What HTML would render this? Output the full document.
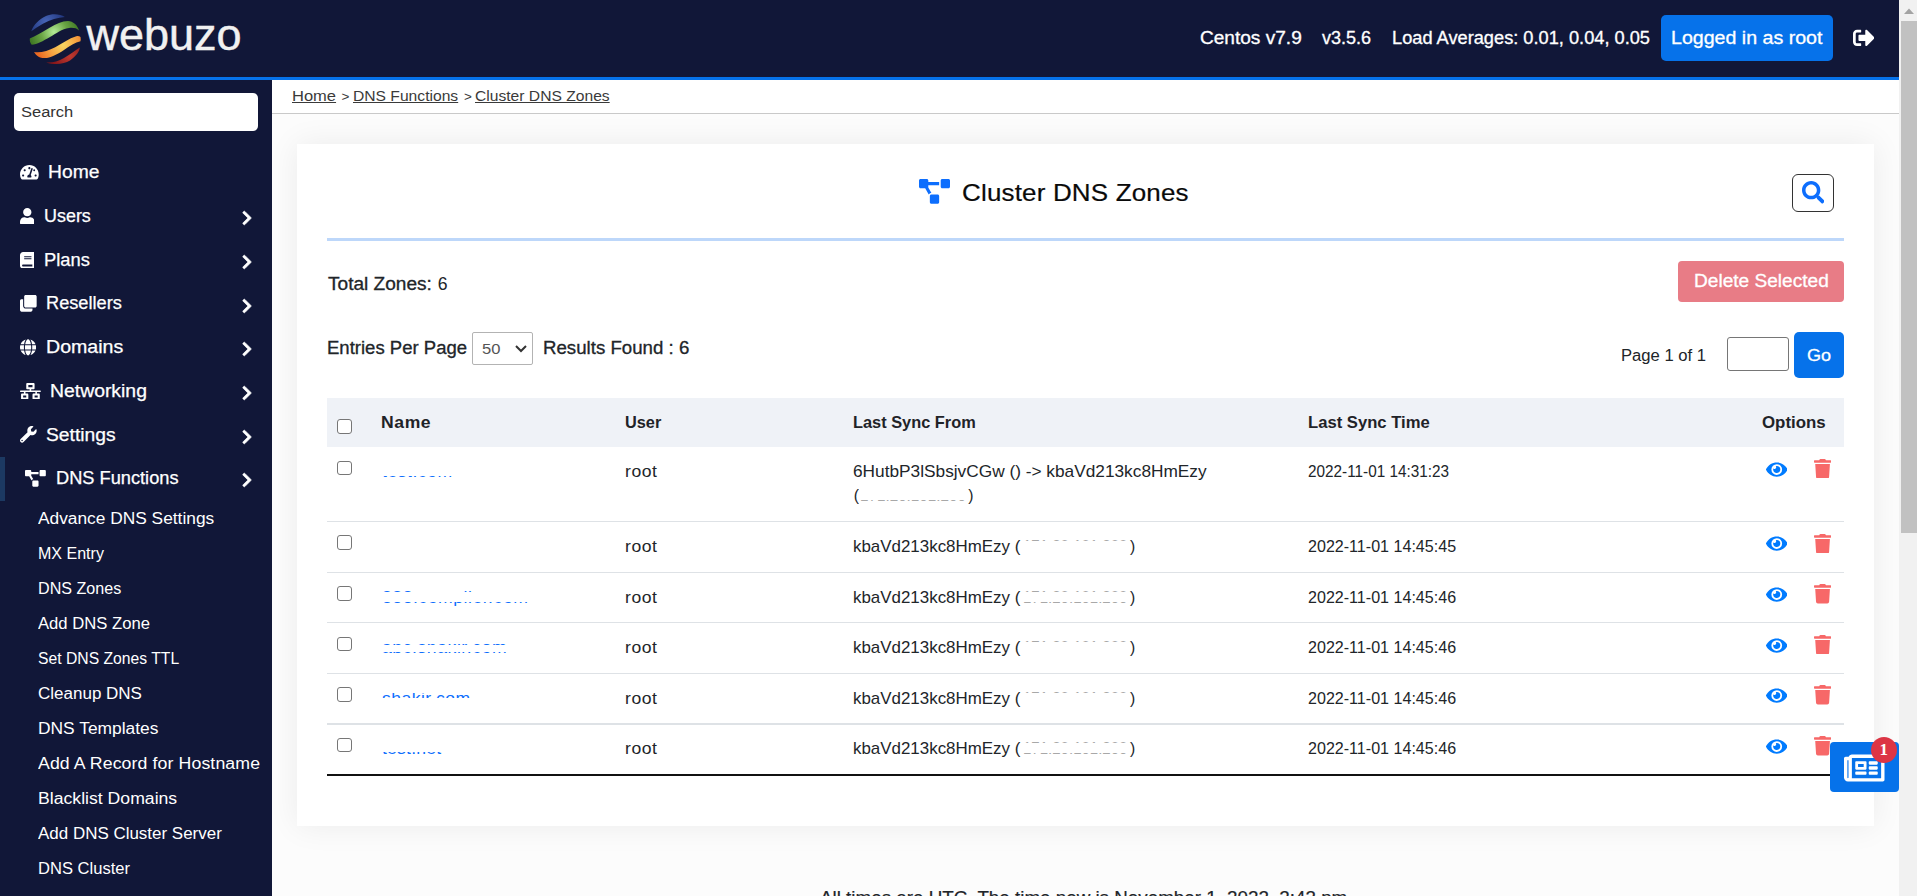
<!DOCTYPE html>
<html lang="en"><head><meta charset="utf-8"><title>Cluster DNS Zones</title>
<style>
*{box-sizing:border-box;margin:0;padding:0}
html,body{width:1917px;height:896px;overflow:hidden;background:#fcfcfc;font-family:"Liberation Sans",sans-serif;color:#212529}
.abs{position:absolute}
.ic{position:absolute;display:block}
.t{position:absolute;white-space:nowrap;line-height:1;transform-origin:0 0}
#hdr{left:0;top:0;width:1899px;height:80px;background:#111738;border-bottom:3px solid #0672ea}
#side{left:0;top:80px;width:272px;height:816px;background:#111738}
#crumb{left:272px;top:80px;width:1627px;height:34px;background:#fff;border-bottom:1.3px solid #c9c9c9}
#card{left:297px;top:144px;width:1577px;height:682px;background:#fff;box-shadow:0 0 30px rgba(0,0,0,.07)}
.cb{position:absolute;width:14.5px;height:14.5px;border:1.3px solid #767676;border-radius:3px;background:#fff}
.hr{position:absolute;left:327px;width:1517px;height:1.4px;background:#dee2e6}
.mask{position:absolute;background:#fff}
u{text-decoration:underline;text-underline-offset:1px}
</style></head>
<body>
<div id="hdr" class="abs"></div>
<svg class="ic" style="left:20px;top:5px;width:80px;height:70px" viewBox="20 5 80 70">
<radialGradient id="gB" gradientUnits="userSpaceOnUse" cx="46" cy="22" r="20"><stop offset="0" stop-color="#4766b8"/><stop offset="1" stop-color="#1e3278"/></radialGradient>
<radialGradient id="gG" gradientUnits="userSpaceOnUse" cx="54" cy="32" r="26"><stop offset="0" stop-color="#b4ec98"/><stop offset=".5" stop-color="#6aa544"/><stop offset="1" stop-color="#3c7422"/></radialGradient>
<radialGradient id="gY" gradientUnits="userSpaceOnUse" cx="63" cy="45" r="26"><stop offset="0" stop-color="#f8d661"/><stop offset=".55" stop-color="#f5a040"/><stop offset="1" stop-color="#ec6a22"/></radialGradient>
<radialGradient id="gR" gradientUnits="userSpaceOnUse" cx="70" cy="56" r="18"><stop offset="0" stop-color="#c03a30"/><stop offset="1" stop-color="#85161a"/></radialGradient>
<path fill="url(#gB)" d="M31.3 31.2 C33 25 39.5 19 46 16 C52 13.5 60 13.8 64.9 17.1 C58 17.5 50 20 43.4 23.5 C38 26.5 34 29.5 31.3 31.2z"/>
<path fill="url(#gG)" d="M29.8 38.6 C36 36 43.4 31.6 50 27.5 C56 24 62 21 68 21 C73 21.2 77.5 25 79 30.4 C76.5 28 73 27.5 69 28 C62 29 56 33.5 50 37 C43 41 37 44.5 31.7 44.8 C30 43 29.6 40.5 29.8 38.6z"/>
<path fill="url(#gY)" d="M34.1 51.9 C40 53 48 51 55.2 47.2 C62 43.5 69 38.5 76.3 36.3 C78 35.9 79.5 36.2 80.5 37 C80.8 38.5 80.8 40 80.5 41.3 C75 42.5 70 46 64 50 C57 54.5 50 58 45 58.1 C40 58.3 36 55.5 34.1 51.9z"/>
<path fill="url(#gR)" d="M46.2 62.4 C52 62.8 58 61.5 64 58 C70 54.5 75.5 50.500 79.8 47.6 C79.5 51.5 76.5 56 70 60.5 C64 64.2 55 65.3 46.2 62.4z"/>
</svg>
<div class="t" style="left:86.5px;top:12px;font-size:45px;color:#f1f1f1;-webkit-text-stroke:0.45px #f1f1f1">webuzo</div>
<div class="t " style="left:1200.20px;top:30.00px;font-size:17.5px;color:#fff;transform:scaleX(1.0893);-webkit-text-stroke:0.3px #fff;">Centos v7.9</div>
<div class="t " style="left:1322.40px;top:30.00px;font-size:17.5px;color:#fff;transform:scaleX(1.0296);-webkit-text-stroke:0.3px #fff;">v3.5.6</div>
<div class="t " style="left:1392.40px;top:30.00px;font-size:17.5px;color:#fff;transform:scaleX(1.0412);-webkit-text-stroke:0.3px #fff;">Load Averages: 0.01, 0.04, 0.05</div>
<div class="abs" style="left:1661px;top:15px;width:172px;height:46px;background:#0672ea;border-radius:5px"></div>
<div class="t " style="left:1671.40px;top:30.00px;font-size:17.5px;color:#fff;transform:scaleX(1.1199);-webkit-text-stroke:0.3px #fff;">Logged in as root</div>
<svg class="ic" style="left:1852.5px;top:27.3px;width:21.80px;height:21.8px;" viewBox="0 0 512 512"><path fill="#fff" d="M497 273L329 441c-15 15-41 4.500-41-17v-96H152c-13.300 0-24-10.700-24-24v-96c0-13.300 10.700-24 24-24h136V88c0-21.400 25.900-32 41-17l168 168c9.300 9.400 9.300 24.600 0 34zM192 436v-40c0-6.600-5.400-12-12-12H96c-17.700 0-32-14.300-32-32V160c0-17.700 14.300-32 32-32h84c6.600 0 12-5.400 12-12V76c0-6.600-5.400-12-12-12H96c-53 0-96 43-96 96v192c0 53 43 96 96 96h84c6.600 0 12-5.400 12-12z"/></svg>
<div id="side" class="abs"></div>
<div class="abs" style="left:14px;top:93px;width:244px;height:38px;background:#fff;border-radius:5px"></div>
<div class="t " style="left:21.20px;top:104.00px;font-size:15.3px;color:#333;transform:scaleX(1.0783);">Search</div>
<div class="abs" style="left:0;top:457px;width:5px;height:43.7px;background:#1c3962"></div>
<svg class="ic" style="left:19.9px;top:164.1px;width:18.75px;height:16.67px;" viewBox="0 0 576 512"><path fill="#fff" d="M288 32C128.94 32 0 160.94 0 320c0 52.8 14.25 102.26 39.06 144.8 5.61 9.62 16.3 15.2 27.44 15.2h443c11.14 0 21.83-5.58 27.44-15.2C561.75 422.26 576 372.8 576 320c0-159.06-128.94-288-288-288zm0 64c17.67 0 32 14.33 32 32s-14.33 32-32 32-32-14.33-32-32 14.33-32 32-32zM96 384c-17.67 0-32-14.33-32-32s14.33-32 32-32 32 14.33 32 32-14.33 32-32 32zm48-160c-17.67 0-32-14.33-32-32s14.33-32 32-32 32 14.33 32 32-14.33 32-32 32zm246.770-72.410l-61.330 184C343.130 347.330 352 364.540 352 384c0 11.720-3.380 22.550-8.880 32H232.880c-5.500-9.450-8.880-20.280-8.880-32 0-33.940 26.500-61.430 59.900-63.590l61.340-184.010c4.170-12.560 17.730-19.450 30.360-15.170 12.570 4.190 19.350 17.790 15.170 30.360zm14.660 57.200l15.520-46.550c3.470-1.290 7.130-2.230 11.050-2.230 17.670 0 32 14.330 32 32s-14.330 32-32 32c-11.380-.010-20.890-6.280-26.570-15.220zM480 384c-17.670 0-32-14.330-32-32s14.330-32 32-32 32 14.330 32 32-14.330 32-32 32z"/></svg>
<div class="t " style="left:48.30px;top:164.00px;font-size:17.6px;color:#fff;transform:scaleX(1.0959);-webkit-text-stroke:0.25px #fff;">Home</div>
<svg class="ic" style="left:19.9px;top:207.8px;width:14.59px;height:16.67px;" viewBox="0 0 448 512"><path fill="#fff" d="M224 256c70.700 0 128-57.300 128-128S294.700 0 224 0 96 57.300 96 128s57.300 128 128 128zm89.600 32h-16.700c-22.200 10.200-46.900 16-72.900 16s-50.600-5.800-72.900-16h-16.700C60.200 288 0 348.200 0 422.400V464c0 26.500 21.500 48 48 48h352c26.500 0 48-21.500 48-48v-41.600c0-74.200-60.200-134.400-134.400-134.400z"/></svg>
<div class="t " style="left:44.20px;top:208.00px;font-size:17.6px;color:#fff;transform:scaleX(1.0188);-webkit-text-stroke:0.25px #fff;">Users</div>
<svg class="ic" style="left:241.7px;top:210.2px;width:10.00px;height:16px;overflow:visible" viewBox="0 0 320 512"><path fill="#fff" stroke="#fff" stroke-width="22" d="M285.476 272.971L91.132 467.314c-9.373 9.373-24.569 9.373-33.941 0l-22.667-22.667c-9.357-9.357-9.375-24.522-.04-33.901L188.505 256 34.484 101.255c-9.335-9.379-9.317-24.544.04-33.901l22.667-22.667c9.373-9.373 24.569-9.373 33.941 0L285.475 239.030c9.373 9.372 9.373 24.568.001 33.941z"/></svg>
<svg class="ic" style="left:19.9px;top:251.5px;width:14.59px;height:16.67px;" viewBox="0 0 448 512"><path fill="#fff" d="M448 360V24c0-13.300-10.700-24-24-24H96C43 0 0 43 0 96v320c0 53 43 96 96 96h328c13.300 0 24-10.700 24-24v-16c0-7.500-3.500-14.300-8.900-18.700-4.200-15.400-4.200-59.300 0-74.700 5.400-4.300 8.900-11.100 8.900-18.600zM128 134c0-3.300 2.700-6 6-6h212c3.300 0 6 2.700 6 6v20c0 3.300-2.700 6-6 6H134c-3.300 0-6-2.700-6-6v-20zm0 64c0-3.300 2.700-6 6-6h212c3.300 0 6 2.700 6 6v20c0 3.300-2.700 6-6 6H134c-3.300 0-6-2.700-6-6v-20zm253.400 250H96c-17.700 0-32-14.300-32-32 0-17.600 14.400-32 32-32h285.400c-1.900 17.100-1.900 46.900 0 64z"/></svg>
<div class="t " style="left:44.20px;top:252.00px;font-size:17.6px;color:#fff;transform:scaleX(1.0432);-webkit-text-stroke:0.25px #fff;">Plans</div>
<svg class="ic" style="left:241.7px;top:253.9px;width:10.00px;height:16px;overflow:visible" viewBox="0 0 320 512"><path fill="#fff" stroke="#fff" stroke-width="22" d="M285.476 272.971L91.132 467.314c-9.373 9.373-24.569 9.373-33.941 0l-22.667-22.667c-9.357-9.357-9.375-24.522-.04-33.901L188.505 256 34.484 101.255c-9.335-9.379-9.317-24.544.04-33.901l22.667-22.667c9.373-9.373 24.569-9.373 33.941 0L285.475 239.030c9.373 9.372 9.373 24.568.001 33.941z"/></svg>
<svg class="ic" style="left:19.9px;top:295.2px;width:16.67px;height:16.67px;" viewBox="0 0 512 512"><path fill="#fff" d="M464 0c26.510 0 48 21.490 48 48v288c0 26.510-21.490 48-48 48H176c-26.510 0-48-21.490-48-48V48c0-26.510 21.490-48 48-48h288M176 416c-44.112 0-80-35.888-80-80V128H48c-26.510 0-48 21.490-48 48v288c0 26.510 21.490 48 48 48h288c26.510 0 48-21.490 48-48v-48H176z"/></svg>
<div class="t " style="left:46.40px;top:295.00px;font-size:17.6px;color:#fff;transform:scaleX(1.0342);-webkit-text-stroke:0.25px #fff;">Resellers</div>
<svg class="ic" style="left:241.7px;top:297.6px;width:10.00px;height:16px;overflow:visible" viewBox="0 0 320 512"><path fill="#fff" stroke="#fff" stroke-width="22" d="M285.476 272.971L91.132 467.314c-9.373 9.373-24.569 9.373-33.941 0l-22.667-22.667c-9.357-9.357-9.375-24.522-.04-33.901L188.505 256 34.484 101.255c-9.335-9.379-9.317-24.544.04-33.901l22.667-22.667c9.373-9.373 24.569-9.373 33.941 0L285.475 239.030c9.373 9.372 9.373 24.568.001 33.941z"/></svg>
<svg class="ic" style="left:19.9px;top:338.9px;width:16.15px;height:16.67px;" viewBox="0 0 496 512"><path fill="#fff" d="M336.500 160C322 70.700 287.800 8 248 8s-74 62.700-88.500 152h177zM152 256c0 22.200 1.200 43.500 3.300 64h185.300c2.100-20.500 3.300-41.800 3.300-64s-1.200-43.500-3.300-64H155.300c-2.100 20.500-3.300 41.800-3.300 64zm324.700-96c-28.600-67.900-86.500-120.400-158-141.600 24.400 33.800 41.200 84.700 50 141.600h108zM177.200 18.400C105.800 39.600 47.800 92.100 19.300 160h108c8.700-56.900 25.500-107.800 49.900-141.600zM487.400 192H372.700c2.100 21 3.300 42.500 3.300 64s-1.200 43-3.300 64h114.600c5.500-20.500 8.600-41.800 8.600-64s-3.100-43.500-8.500-64zM120 256c0-21.500 1.200-43 3.300-64H8.600C3.200 212.500 0 233.800 0 256s3.200 43.500 8.600 64h114.600c-2-21-3.200-42.500-3.200-64zm39.500 96c14.500 89.300 48.700 152 88.500 152s74-62.700 88.500-152h-177zm159.300 141.600c71.400-21.200 129.400-73.700 158-141.600h-108c-8.800 56.900-25.600 107.800-50 141.600zM19.300 352c28.600 67.900 86.500 120.400 158 141.600-24.400-33.800-41.200-84.700-50-141.600h-108z"/></svg>
<div class="t " style="left:46.00px;top:339.00px;font-size:17.6px;color:#fff;transform:scaleX(1.1133);-webkit-text-stroke:0.25px #fff;">Domains</div>
<svg class="ic" style="left:241.7px;top:341.3px;width:10.00px;height:16px;overflow:visible" viewBox="0 0 320 512"><path fill="#fff" stroke="#fff" stroke-width="22" d="M285.476 272.971L91.132 467.314c-9.373 9.373-24.569 9.373-33.941 0l-22.667-22.667c-9.357-9.357-9.375-24.522-.04-33.901L188.505 256 34.484 101.255c-9.335-9.379-9.317-24.544.04-33.901l22.667-22.667c9.373-9.373 24.569-9.373 33.941 0L285.475 239.030c9.373 9.372 9.373 24.568.001 33.941z"/></svg>
<svg class="ic" style="left:19.9px;top:382.6px;width:20.84px;height:16.67px;" viewBox="0 0 640 512"><path fill="#fff" d="M640 264v-16c0-8.840-7.160-16-16-16H344v-40h72c17.670 0 32-14.330 32-32V32c0-17.670-14.330-32-32-32H224c-17.670 0-32 14.330-32 32v128c0 17.670 14.330 32 32 32h72v40H16c-8.840 0-16 7.160-16 16v16c0 8.840 7.160 16 16 16h104v40H64c-17.670 0-32 14.330-32 32v128c0 17.670 14.330 32 32 32h160c17.670 0 32-14.330 32-32V352c0-17.670-14.330-32-32-32h-56v-40h304v40h-56c-17.670 0-32 14.330-32 32v128c0 17.670 14.330 32 32 32h160c17.670 0 32-14.330 32-32V352c0-17.670-14.330-32-32-32h-56v-40h104c8.840 0 16-7.160 16-16zM256 128V64h128v64H256zm-64 320H96v-64h96v64zm352 0h-96v-64h96v64z"/></svg>
<div class="t " style="left:50.30px;top:383.00px;font-size:17.6px;color:#fff;transform:scaleX(1.1011);-webkit-text-stroke:0.25px #fff;">Networking</div>
<svg class="ic" style="left:241.7px;top:385.0px;width:10.00px;height:16px;overflow:visible" viewBox="0 0 320 512"><path fill="#fff" stroke="#fff" stroke-width="22" d="M285.476 272.971L91.132 467.314c-9.373 9.373-24.569 9.373-33.941 0l-22.667-22.667c-9.357-9.357-9.375-24.522-.04-33.901L188.505 256 34.484 101.255c-9.335-9.379-9.317-24.544.04-33.901l22.667-22.667c9.373-9.373 24.569-9.373 33.941 0L285.475 239.030c9.373 9.372 9.373 24.568.001 33.941z"/></svg>
<svg class="ic" style="left:19.9px;top:426.3px;width:16.67px;height:16.67px;" viewBox="0 0 512 512"><path fill="#fff" d="M507.730 109.100c-2.240-9.030-13.540-12.090-20.120-5.510l-74.360 74.360-67.880-11.310-11.310-67.880 74.360-74.360c6.620-6.620 3.430-17.900-5.660-20.160-47.380-11.740-99.550.91-136.580 37.930-39.640 39.640-50.550 97.100-34.050 147.200L18.740 402.760c-24.990 24.990-24.990 65.510 0 90.500 24.990 24.990 65.510 24.990 90.500 0l213.210-213.210c50.120 16.710 107.470 5.680 147.370-34.220 37.070-37.070 49.700-89.320 37.910-136.730zM64 472c-13.250 0-24-10.750-24-24 0-13.260 10.750-24 24-24s24 10.740 24 24c0 13.250-10.750 24-24 24z"/></svg>
<div class="t " style="left:46.40px;top:427.00px;font-size:17.6px;color:#fff;transform:scaleX(1.0955);-webkit-text-stroke:0.25px #fff;">Settings</div>
<svg class="ic" style="left:241.7px;top:428.7px;width:10.00px;height:16px;overflow:visible" viewBox="0 0 320 512"><path fill="#fff" stroke="#fff" stroke-width="22" d="M285.476 272.971L91.132 467.314c-9.373 9.373-24.569 9.373-33.941 0l-22.667-22.667c-9.357-9.357-9.375-24.522-.04-33.901L188.505 256 34.484 101.255c-9.335-9.379-9.317-24.544.04-33.901l22.667-22.667c9.373-9.373 24.569-9.373 33.941 0L285.475 239.030c9.373 9.372 9.373 24.568.001 33.941z"/></svg>
<svg class="ic" style="left:24.7px;top:470.0px;width:20.84px;height:16.67px;" viewBox="0 0 640 512"><path fill="#fff" d="M384 320H256c-17.670 0-32 14.330-32 32v128c0 17.670 14.330 32 32 32h128c17.670 0 32-14.330 32-32V352c0-17.670-14.330-32-32-32zM192 32c0-17.670-14.330-32-32-32H32C14.330 0 0 14.330 0 32v128c0 17.670 14.330 32 32 32h95.720l73.160 128.040C211.980 300.980 232.400 288 256 288h.28L192 175.510V128h224V64H192V32zM608 0H480c-17.670 0-32 14.330-32 32v128c0 17.670 14.330 32 32 32h128c17.670 0 32-14.330 32-32V32c0-17.670-14.330-32-32-32z"/></svg>
<div class="t " style="left:55.60px;top:470.00px;font-size:17.6px;color:#fff;transform:scaleX(1.0358);-webkit-text-stroke:0.25px #fff;">DNS Functions</div>
<svg class="ic" style="left:241.7px;top:472.4px;width:10.00px;height:16px;overflow:visible" viewBox="0 0 320 512"><path fill="#fff" stroke="#fff" stroke-width="22" d="M285.476 272.971L91.132 467.314c-9.373 9.373-24.569 9.373-33.941 0l-22.667-22.667c-9.357-9.357-9.375-24.522-.04-33.901L188.505 256 34.484 101.255c-9.335-9.379-9.317-24.544.04-33.901l22.667-22.667c9.373-9.373 24.569-9.373 33.941 0L285.475 239.030c9.373 9.372 9.373 24.568.001 33.941z"/></svg>
<div class="t " style="left:38.10px;top:511.00px;font-size:15.8px;color:#fff;transform:scaleX(1.0965);">Advance DNS Settings</div>
<div class="t " style="left:38.10px;top:546.00px;font-size:15.8px;color:#fff;transform:scaleX(1.0148);">MX Entry</div>
<div class="t " style="left:38.10px;top:581.00px;font-size:15.8px;color:#fff;transform:scaleX(1.0198);">DNS Zones</div>
<div class="t " style="left:38.10px;top:616.00px;font-size:15.8px;color:#fff;transform:scaleX(1.0531);">Add DNS Zone</div>
<div class="t " style="left:38.10px;top:651.00px;font-size:15.8px;color:#fff;transform:scaleX(0.9946);">Set DNS Zones TTL</div>
<div class="t " style="left:38.10px;top:686.00px;font-size:15.8px;color:#fff;transform:scaleX(1.0764);">Cleanup DNS</div>
<div class="t " style="left:38.10px;top:721.00px;font-size:15.8px;color:#fff;transform:scaleX(1.1005);">DNS Templates</div>
<div class="t " style="left:38.10px;top:756.00px;font-size:15.8px;color:#fff;letter-spacing:0.099px;transform:scaleX(1.1200);">Add A Record for Hostname</div>
<div class="t " style="left:38.10px;top:791.00px;font-size:15.8px;color:#fff;transform:scaleX(1.1166);">Blacklist Domains</div>
<div class="t " style="left:38.10px;top:826.00px;font-size:15.8px;color:#fff;transform:scaleX(1.0736);">Add DNS Cluster Server</div>
<div class="t " style="left:38.10px;top:861.00px;font-size:15.8px;color:#fff;transform:scaleX(1.0482);">DNS Cluster</div>
<div id="crumb" class="abs"></div>
<div class="t " style="left:292.20px;top:89.00px;font-size:14.8px;color:#3a3a3a;transform:scaleX(1.1160);"><u>Home</u></div>
<div class="t " style="left:341.60px;top:90.00px;font-size:13.5px;color:#3a3a3a;">&gt;</div>
<div class="t " style="left:353.20px;top:89.00px;font-size:14.8px;color:#3a3a3a;transform:scaleX(1.0570);"><u>DNS Functions</u></div>
<div class="t " style="left:464.00px;top:90.00px;font-size:13.5px;color:#3a3a3a;">&gt;</div>
<div class="t " style="left:475.30px;top:89.00px;font-size:14.8px;color:#3a3a3a;transform:scaleX(1.0565);"><u>Cluster DNS Zones</u></div>
<div id="card" class="abs"></div>
<svg class="ic" style="left:918.6px;top:179.2px;width:31.00px;height:24.8px;" viewBox="0 0 640 512"><path fill="#0d6efd" d="M384 320H256c-17.670 0-32 14.330-32 32v128c0 17.670 14.330 32 32 32h128c17.670 0 32-14.330 32-32V352c0-17.670-14.330-32-32-32zM192 32c0-17.670-14.330-32-32-32H32C14.330 0 0 14.330 0 32v128c0 17.670 14.330 32 32 32h95.720l73.160 128.040C211.980 300.980 232.400 288 256 288h.28L192 175.510V128h224V64H192V32zM608 0H480c-17.670 0-32 14.330-32 32v128c0 17.670 14.330 32 32 32h128c17.670 0 32-14.330 32-32V32c0-17.670-14.330-32-32-32z"/></svg>
<div class="t " style="left:962.30px;top:182.00px;font-size:23.2px;color:#0a0a0a;letter-spacing:0.159px;transform:scaleX(1.1200);-webkit-text-stroke:0.2px #0a0a0a;">Cluster DNS Zones</div>
<div class="abs" style="left:1792px;top:174px;width:42px;height:38px;border:1.2px solid #333;border-radius:6px;background:#fff"></div>
<svg class="ic" style="left:1801.9px;top:181.3px;width:22.60px;height:22.6px;" viewBox="0 0 512 512"><path fill="#0d6efd" d="M505 442.700L405.300 343c-4.500-4.500-10.600-7-17-7H372c27.600-35.300 44-79.700 44-128C416 93.100 322.900 0 208 0S0 93.100 0 208s93.100 208 208 208c48.300 0 92.700-16.400 128-44v16.300c0 6.400 2.500 12.500 7 17l99.700 99.700c9.400 9.400 24.600 9.400 33.900 0l28.300-28.300c9.400-9.400 9.400-24.600.1-34zM208 336c-70.700 0-128-57.200-128-128 0-70.700 57.200-128 128-128 70.700 0 128 57.200 128 128 0 70.700-57.200 128-128 128z"/></svg>
<div class="abs" style="left:327px;top:238px;width:1517px;height:3px;background:#bdd7fa"></div>
<div class="t " style="left:327.90px;top:276.00px;font-size:17.6px;color:#212529;transform:scaleX(1.0842);-webkit-text-stroke:0.3px #212529;">Total Zones:</div>
<div class="t " style="left:437.70px;top:276.00px;font-size:17.6px;color:#212529;">6</div>
<div class="abs" style="left:1678px;top:261px;width:166px;height:41px;background:#e87c86;border-radius:4px"></div>
<div class="t " style="left:1693.50px;top:273.00px;font-size:17.5px;color:#fff;transform:scaleX(1.0911);-webkit-text-stroke:0.3px #fff;">Delete Selected</div>
<div class="t " style="left:327.20px;top:340.00px;font-size:17.6px;color:#212529;transform:scaleX(1.0529);-webkit-text-stroke:0.3px #212529;">Entries Per Page</div>
<div class="abs" style="left:472px;top:332px;width:61px;height:32.5px;border:1px solid #b3b3b3;border-radius:2px;background:#fff"></div>
<div class="t " style="left:481.90px;top:341.00px;font-size:15.3px;color:#555;transform:scaleX(1.0834);">50</div>
<svg class="ic" style="left:514px;top:343px;width:14px;height:11px" viewBox="0 0 14 11"><path d="M2 3 L7 8 L12 3" fill="none" stroke="#333" stroke-width="2"/></svg>
<div class="t " style="left:542.70px;top:340.00px;font-size:17.6px;color:#212529;transform:scaleX(1.0610);-webkit-text-stroke:0.3px #212529;">Results Found : 6</div>
<div class="t " style="left:1621.00px;top:347.00px;font-size:17.3px;color:#212529;transform:scaleX(0.9617);">Page 1 of 1</div>
<div class="abs" style="left:1727px;top:337px;width:62px;height:34px;border:1.3px solid #767676;border-radius:3px;background:#fff"></div>
<div class="abs" style="left:1794px;top:332px;width:50px;height:46px;background:#0672ea;border-radius:5px"></div>
<div class="t " style="left:1807.20px;top:347.00px;font-size:17.3px;color:#fff;transform:scaleX(1.0435);-webkit-text-stroke:0.3px #fff;">Go</div>
<div class="abs" style="left:327px;top:398px;width:1517px;height:48.8px;background:#eff2f7"></div>
<div class="cb" style="left:337.3px;top:419.3px"></div>
<div class="t " style="left:381.00px;top:415.00px;font-size:15.7px;color:#1f2328;letter-spacing:0.531px;transform:scaleX(1.1200);font-weight:bold;">Name</div>
<div class="t " style="left:625.00px;top:415.00px;font-size:15.7px;color:#1f2328;transform:scaleX(1.0391);font-weight:bold;">User</div>
<div class="t " style="left:852.80px;top:415.00px;font-size:15.7px;color:#1f2328;transform:scaleX(1.0429);font-weight:bold;">Last Sync From</div>
<div class="t " style="left:1307.50px;top:415.00px;font-size:15.7px;color:#1f2328;transform:scaleX(1.0607);font-weight:bold;">Last Sync Time</div>
<div class="t " style="left:1762.40px;top:415.00px;font-size:15.7px;color:#1f2328;transform:scaleX(1.0748);font-weight:bold;">Options</div>
<div class="cb" style="left:337.3px;top:460.6px"></div>
<div class="t " style="left:381.90px;top:464.00px;font-size:15.7px;color:#0d6efd;letter-spacing:0.463px;transform:scaleX(1.1200);">test.com</div>
<div class="mask" style="left:378.0px;top:462.0px;width:80.0px;height:13.7px"></div>
<div class="mask" style="left:378.0px;top:477.5px;width:80.0px;height:4.5px"></div>
<div class="t " style="left:625.00px;top:464.00px;font-size:15.7px;color:#212529;letter-spacing:0.496px;transform:scaleX(1.1200);">root</div>
<div class="t " style="left:853.30px;top:464.00px;font-size:15.7px;color:#212529;transform:scaleX(1.1007);">6HutbP3lSbsjvCGw () -&gt; kbaVd213kc8HmEzy</div>
<div class="t " style="left:853.80px;top:488.00px;font-size:15.7px;color:#212529;">(</div>
<div class="t " style="left:860.00px;top:488.00px;font-size:15.7px;color:#a8a8a8;transform:scaleX(0.9715);">171.20.101.200</div>
<div class="mask" style="left:859.0px;top:486.0px;width:108.5px;height:14.0px"></div>
<div class="mask" style="left:859.0px;top:501.0px;width:108.5px;height:5.0px"></div>
<div class="t " style="left:968.20px;top:488.00px;font-size:15.7px;color:#212529;">)</div>
<div class="t " style="left:1307.50px;top:464.00px;font-size:15.7px;color:#212529;transform:scaleX(0.9758);">2022-11-01 14:31:23</div>
<svg class="ic" style="left:1765.9px;top:459.6px;width:21.49px;height:19.1px;" viewBox="0 0 576 512"><path fill="#007bff" d="M572.52 241.4C518.29 135.59 410.93 64 288 64S57.68 135.64 3.48 241.41a32.35 32.35 0 0 0 0 29.190C57.710 376.410 165.070 448 288 448s230.320-71.640 284.520-177.410a32.350 32.350 0 0 0 0-29.190zM288 400a144 144 0 1 1 144-144 143.930 143.930 0 0 1-144 144zm0-240a95.310 95.310 0 0 0-25.310 3.790 47.850 47.850 0 0 1-66.900 66.900A95.780 95.780 0 1 0 288 160z"/></svg>
<svg class="ic" style="left:1813.9px;top:458.8px;width:17.15px;height:19.6px;" viewBox="0 0 448 512"><path fill="#f76868" d="M432 32H312l-9.400-18.700A24 24 0 0 0 281.100 0H166.800a23.720 23.720 0 0 0-21.400 13.300L136 32H16A16 16 0 0 0 0 48v32a16 16 0 0 0 16 16h416a16 16 0 0 0 16-16V48a16 16 0 0 0-16-16zM53.200 467a48 48 0 0 0 47.900 45h245.800a48 48 0 0 0 47.900-45L416 128H32z"/></svg>
<div class="hr" style="top:520.9px"></div>
<div class="cb" style="left:337.3px;top:535.4px"></div>
<div class="t " style="left:381.90px;top:539.00px;font-size:15.7px;color:#0d6efd;letter-spacing:1.103px;transform:scaleX(1.1200);">ab.in</div>
<div class="mask" style="left:378.0px;top:537.0px;width:53.0px;height:20.0px"></div>
<div class="t " style="left:625.00px;top:539.00px;font-size:15.7px;color:#212529;letter-spacing:0.496px;transform:scaleX(1.1200);">root</div>
<div class="t " style="left:852.80px;top:539.00px;font-size:15.7px;color:#212529;transform:scaleX(1.0782);">kbaVd213kc8HmEzy (</div>
<div class="t " style="left:1023.00px;top:539.00px;font-size:15.7px;color:#a8a8a8;transform:scaleX(0.9577);">171.20.101.200</div>
<div class="mask" style="left:1021.5px;top:537.0px;width:107.5px;height:3.2px"></div>
<div class="mask" style="left:1021.5px;top:541.0px;width:107.5px;height:16.0px"></div>
<div class="t " style="left:1130.10px;top:539.00px;font-size:15.7px;color:#212529;">)</div>
<div class="t " style="left:1307.50px;top:539.00px;font-size:15.7px;color:#212529;transform:scaleX(1.0249);">2022-11-01 14:45:45</div>
<svg class="ic" style="left:1765.9px;top:534.4px;width:21.49px;height:19.1px;" viewBox="0 0 576 512"><path fill="#007bff" d="M572.52 241.4C518.29 135.59 410.93 64 288 64S57.68 135.64 3.48 241.41a32.35 32.35 0 0 0 0 29.190C57.710 376.410 165.070 448 288 448s230.320-71.640 284.520-177.410a32.350 32.350 0 0 0 0-29.190zM288 400a144 144 0 1 1 144-144 143.930 143.930 0 0 1-144 144zm0-240a95.310 95.310 0 0 0-25.310 3.790 47.850 47.850 0 0 1-66.900 66.900A95.780 95.780 0 1 0 288 160z"/></svg>
<svg class="ic" style="left:1813.9px;top:533.6px;width:17.15px;height:19.6px;" viewBox="0 0 448 512"><path fill="#f76868" d="M432 32H312l-9.400-18.700A24 24 0 0 0 281.100 0H166.800a23.720 23.720 0 0 0-21.400 13.300L136 32H16A16 16 0 0 0 0 48v32a16 16 0 0 0 16 16h416a16 16 0 0 0 16-16V48a16 16 0 0 0-16-16zM53.200 467a48 48 0 0 0 47.900 45h245.800a48 48 0 0 0 47.900-45L416 128H32z"/></svg>
<div class="hr" style="top:571.5px"></div>
<div class="cb" style="left:337.3px;top:586.0px"></div>
<div class="t " style="left:381.90px;top:590.00px;font-size:15.7px;color:#0d6efd;letter-spacing:0.484px;transform:scaleX(1.1200);">888.complier.com</div>
<div class="mask" style="left:378.0px;top:588.0px;width:155.8px;height:3.4px"></div>
<div class="mask" style="left:378.0px;top:592.1px;width:155.8px;height:9.9px"></div>
<div class="t " style="left:625.00px;top:590.00px;font-size:15.7px;color:#212529;letter-spacing:0.496px;transform:scaleX(1.1200);">root</div>
<div class="t " style="left:852.80px;top:590.00px;font-size:15.7px;color:#212529;transform:scaleX(1.0782);">kbaVd213kc8HmEzy (</div>
<div class="t " style="left:1023.00px;top:590.00px;font-size:15.7px;color:#a8a8a8;transform:scaleX(0.9577);">171.20.101.200</div>
<div class="mask" style="left:1021.5px;top:588.0px;width:107.5px;height:3.2px"></div>
<div class="mask" style="left:1021.5px;top:592.0px;width:107.5px;height:10.0px"></div>
<div class="mask" style="left:1021.5px;top:603.0px;width:107.5px;height:5.0px"></div>
<div class="t " style="left:1130.10px;top:590.00px;font-size:15.7px;color:#212529;">)</div>
<div class="t " style="left:1307.50px;top:590.00px;font-size:15.7px;color:#212529;transform:scaleX(1.0249);">2022-11-01 14:45:46</div>
<svg class="ic" style="left:1765.9px;top:585.0px;width:21.49px;height:19.1px;" viewBox="0 0 576 512"><path fill="#007bff" d="M572.52 241.4C518.29 135.59 410.93 64 288 64S57.68 135.64 3.48 241.41a32.35 32.35 0 0 0 0 29.190C57.710 376.410 165.070 448 288 448s230.320-71.640 284.520-177.410a32.350 32.350 0 0 0 0-29.190zM288 400a144 144 0 1 1 144-144 143.930 143.930 0 0 1-144 144zm0-240a95.310 95.310 0 0 0-25.310 3.790 47.850 47.850 0 0 1-66.900 66.900A95.780 95.780 0 1 0 288 160z"/></svg>
<svg class="ic" style="left:1813.9px;top:584.2px;width:17.15px;height:19.6px;" viewBox="0 0 448 512"><path fill="#f76868" d="M432 32H312l-9.400-18.700A24 24 0 0 0 281.100 0H166.800a23.720 23.720 0 0 0-21.400 13.300L136 32H16A16 16 0 0 0 0 48v32a16 16 0 0 0 16 16h416a16 16 0 0 0 16-16V48a16 16 0 0 0-16-16zM53.200 467a48 48 0 0 0 47.900 45h245.800a48 48 0 0 0 47.900-45L416 128H32z"/></svg>
<div class="hr" style="top:622.1px"></div>
<div class="cb" style="left:337.3px;top:636.6px"></div>
<div class="t " style="left:381.90px;top:640.00px;font-size:15.7px;color:#0d6efd;letter-spacing:0.509px;transform:scaleX(1.1200);">abc.shakir.com</div>
<div class="mask" style="left:378.0px;top:638.0px;width:134.6px;height:6.3px"></div>
<div class="mask" style="left:378.0px;top:645.0px;width:134.6px;height:7.0px"></div>
<div class="mask" style="left:378.0px;top:653.0px;width:134.6px;height:5.0px"></div>
<div class="t " style="left:625.00px;top:640.00px;font-size:15.7px;color:#212529;letter-spacing:0.496px;transform:scaleX(1.1200);">root</div>
<div class="t " style="left:852.80px;top:640.00px;font-size:15.7px;color:#212529;transform:scaleX(1.0782);">kbaVd213kc8HmEzy (</div>
<div class="t " style="left:1023.00px;top:640.00px;font-size:15.7px;color:#a8a8a8;transform:scaleX(0.9577);">171.20.101.200</div>
<div class="mask" style="left:1021.5px;top:638.0px;width:107.5px;height:3.2px"></div>
<div class="mask" style="left:1021.5px;top:642.4px;width:107.5px;height:15.6px"></div>
<div class="t " style="left:1130.10px;top:640.00px;font-size:15.7px;color:#212529;">)</div>
<div class="t " style="left:1307.50px;top:640.00px;font-size:15.7px;color:#212529;transform:scaleX(1.0249);">2022-11-01 14:45:46</div>
<svg class="ic" style="left:1765.9px;top:635.6px;width:21.49px;height:19.1px;" viewBox="0 0 576 512"><path fill="#007bff" d="M572.52 241.4C518.29 135.59 410.93 64 288 64S57.68 135.64 3.48 241.41a32.35 32.35 0 0 0 0 29.190C57.710 376.410 165.070 448 288 448s230.320-71.640 284.520-177.410a32.350 32.350 0 0 0 0-29.190zM288 400a144 144 0 1 1 144-144 143.930 143.930 0 0 1-144 144zm0-240a95.310 95.310 0 0 0-25.310 3.790 47.850 47.850 0 0 1-66.900 66.900A95.780 95.780 0 1 0 288 160z"/></svg>
<svg class="ic" style="left:1813.9px;top:634.8px;width:17.15px;height:19.6px;" viewBox="0 0 448 512"><path fill="#f76868" d="M432 32H312l-9.400-18.700A24 24 0 0 0 281.100 0H166.800a23.720 23.720 0 0 0-21.400 13.300L136 32H16A16 16 0 0 0 0 48v32a16 16 0 0 0 16 16h416a16 16 0 0 0 16-16V48a16 16 0 0 0-16-16zM53.200 467a48 48 0 0 0 47.900 45h245.800a48 48 0 0 0 47.900-45L416 128H32z"/></svg>
<div class="hr" style="top:672.7px"></div>
<div class="cb" style="left:337.3px;top:687.2px"></div>
<div class="t " style="left:381.90px;top:691.00px;font-size:15.7px;color:#0d6efd;letter-spacing:0.402px;transform:scaleX(1.1200);">shakir.com</div>
<div class="mask" style="left:378.0px;top:689.0px;width:98.0px;height:4.0px"></div>
<div class="mask" style="left:378.0px;top:698.4px;width:98.0px;height:10.6px"></div>
<div class="t " style="left:625.00px;top:691.00px;font-size:15.7px;color:#212529;letter-spacing:0.496px;transform:scaleX(1.1200);">root</div>
<div class="t " style="left:852.80px;top:691.00px;font-size:15.7px;color:#212529;transform:scaleX(1.0782);">kbaVd213kc8HmEzy (</div>
<div class="t " style="left:1023.00px;top:691.00px;font-size:15.7px;color:#a8a8a8;transform:scaleX(0.9577);">171.20.101.200</div>
<div class="mask" style="left:1021.5px;top:689.0px;width:107.5px;height:3.2px"></div>
<div class="mask" style="left:1021.5px;top:693.0px;width:107.5px;height:16.0px"></div>
<div class="t " style="left:1130.10px;top:691.00px;font-size:15.7px;color:#212529;">)</div>
<div class="t " style="left:1307.50px;top:691.00px;font-size:15.7px;color:#212529;transform:scaleX(1.0249);">2022-11-01 14:45:46</div>
<svg class="ic" style="left:1765.9px;top:686.2px;width:21.49px;height:19.1px;" viewBox="0 0 576 512"><path fill="#007bff" d="M572.52 241.4C518.29 135.59 410.93 64 288 64S57.68 135.64 3.48 241.41a32.35 32.35 0 0 0 0 29.190C57.710 376.410 165.070 448 288 448s230.320-71.640 284.520-177.410a32.350 32.350 0 0 0 0-29.190zM288 400a144 144 0 1 1 144-144 143.930 143.930 0 0 1-144 144zm0-240a95.310 95.310 0 0 0-25.310 3.790 47.850 47.850 0 0 1-66.900 66.900A95.780 95.780 0 1 0 288 160z"/></svg>
<svg class="ic" style="left:1813.9px;top:685.4px;width:17.15px;height:19.6px;" viewBox="0 0 448 512"><path fill="#f76868" d="M432 32H312l-9.400-18.700A24 24 0 0 0 281.100 0H166.800a23.720 23.720 0 0 0-21.400 13.300L136 32H16A16 16 0 0 0 0 48v32a16 16 0 0 0 16 16h416a16 16 0 0 0 16-16V48a16 16 0 0 0-16-16zM53.200 467a48 48 0 0 0 47.900 45h245.800a48 48 0 0 0 47.900-45L416 128H32z"/></svg>
<div class="hr" style="top:723.3px"></div>
<div class="cb" style="left:337.3px;top:737.8px"></div>
<div class="t " style="left:381.90px;top:741.00px;font-size:15.7px;color:#0d6efd;letter-spacing:0.182px;transform:scaleX(1.1200);">test.net</div>
<div class="mask" style="left:378.0px;top:739.0px;width:69.0px;height:12.9px"></div>
<div class="mask" style="left:378.0px;top:754.5px;width:69.0px;height:4.5px"></div>
<div class="t " style="left:625.00px;top:741.00px;font-size:15.7px;color:#212529;letter-spacing:0.496px;transform:scaleX(1.1200);">root</div>
<div class="t " style="left:852.80px;top:741.00px;font-size:15.7px;color:#212529;transform:scaleX(1.0782);">kbaVd213kc8HmEzy (</div>
<div class="t " style="left:1023.00px;top:741.00px;font-size:15.7px;color:#a8a8a8;transform:scaleX(0.9577);">171.20.101.200</div>
<div class="mask" style="left:1021.5px;top:739.0px;width:107.5px;height:3.2px"></div>
<div class="mask" style="left:1021.5px;top:742.8px;width:107.5px;height:10.4px"></div>
<div class="mask" style="left:1021.5px;top:754.0px;width:107.5px;height:5.0px"></div>
<div class="t " style="left:1130.10px;top:741.00px;font-size:15.7px;color:#212529;">)</div>
<div class="t " style="left:1307.50px;top:741.00px;font-size:15.7px;color:#212529;transform:scaleX(1.0249);">2022-11-01 14:45:46</div>
<svg class="ic" style="left:1765.9px;top:736.8px;width:21.49px;height:19.1px;" viewBox="0 0 576 512"><path fill="#007bff" d="M572.52 241.4C518.29 135.59 410.93 64 288 64S57.68 135.64 3.48 241.41a32.35 32.35 0 0 0 0 29.190C57.710 376.410 165.070 448 288 448s230.320-71.640 284.520-177.410a32.350 32.350 0 0 0 0-29.190zM288 400a144 144 0 1 1 144-144 143.930 143.930 0 0 1-144 144zm0-240a95.310 95.310 0 0 0-25.310 3.790 47.850 47.850 0 0 1-66.900 66.900A95.780 95.780 0 1 0 288 160z"/></svg>
<svg class="ic" style="left:1813.9px;top:736.0px;width:17.15px;height:19.6px;" viewBox="0 0 448 512"><path fill="#f76868" d="M432 32H312l-9.400-18.700A24 24 0 0 0 281.100 0H166.800a23.720 23.720 0 0 0-21.400 13.300L136 32H16A16 16 0 0 0 0 48v32a16 16 0 0 0 16 16h416a16 16 0 0 0 16-16V48a16 16 0 0 0-16-16zM53.200 467a48 48 0 0 0 47.900 45h245.800a48 48 0 0 0 47.900-45L416 128H32z"/></svg>
<div class="abs" style="left:327px;top:774px;width:1517px;height:2px;background:#111"></div>
<div class="t " style="left:819.50px;top:890.00px;font-size:17.6px;color:#212529;transform:scaleX(1.0685);-webkit-text-stroke:0.2px #212529;">All times are UTC. The time now is November 1, 2022, 2:43 pm</div>
<div class="abs" style="left:1830px;top:742px;width:69px;height:50px;background:#0672ea;border-radius:4px"></div>
<svg class="ic" style="left:1844px;top:750px;width:40.50px;height:36px;" viewBox="0 0 576 512"><path fill="#fff" d="M552 64H112c-20.858 0-38.643 13.377-45.248 32H24c-13.255 0-24 10.745-24 24v272c0 30.928 25.072 56 56 56h496c13.255 0 24-10.745 24-24V88c0-13.255-10.745-24-24-24zM48 392V144h16v248c0 4.411-3.589 8-8 8s-8-3.589-8-8zm480 8H111.422c.374-2.614.578-5.283.578-8V112h416v288zM172 280h136c6.627 0 12-5.373 12-12v-96c0-6.627-5.373-12-12-12H172c-6.627 0-12 5.373-12 12v96c0 6.627 5.373 12 12 12zm28-80h80v40h-80v-40zm-40 140v-24c0-6.627 5.373-12 12-12h136c6.627 0 12 5.373 12 12v24c0 6.627-5.373 12-12 12H172c-6.627 0-12-5.373-12-12zm192 0v-24c0-6.627 5.373-12 12-12h104c6.627 0 12 5.373 12 12v24c0 6.627-5.373 12-12 12H364c-6.627 0-12-5.373-12-12zm0-144v-24c0-6.627 5.373-12 12-12h104c6.627 0 12 5.373 12 12v24c0 6.627-5.373 12-12 12H364c-6.627 0-12-5.373-12-12zm0 72v-24c0-6.627 5.373-12 12-12h104c6.627 0 12 5.373 12 12v24c0 6.627-5.373 12-12 12H364c-6.627 0-12-5.373-12-12z"/></svg>
<div class="abs" style="left:1871px;top:736.5px;width:26px;height:26px;border-radius:13px;background:#dc3545"></div>
<div class="t" style="left:1879.5px;top:741px;font-family:'Liberation Serif',serif;font-weight:bold;font-size:17px;color:#fff">1</div>
<div class="abs" style="left:1899px;top:0;width:18px;height:896px;background:#f1f1f1"></div>
<div class="abs" style="left:1901px;top:21px;width:16px;height:511.5px;background:#c1c1c1"></div>
<svg class="ic" style="left:1904.4px;top:7.8px;width:10px;height:6px" viewBox="0 0 10 6"><path d="M0 6 L5 0.5 L10 6z" fill="#a3a3a3"/></svg>
</body></html>
